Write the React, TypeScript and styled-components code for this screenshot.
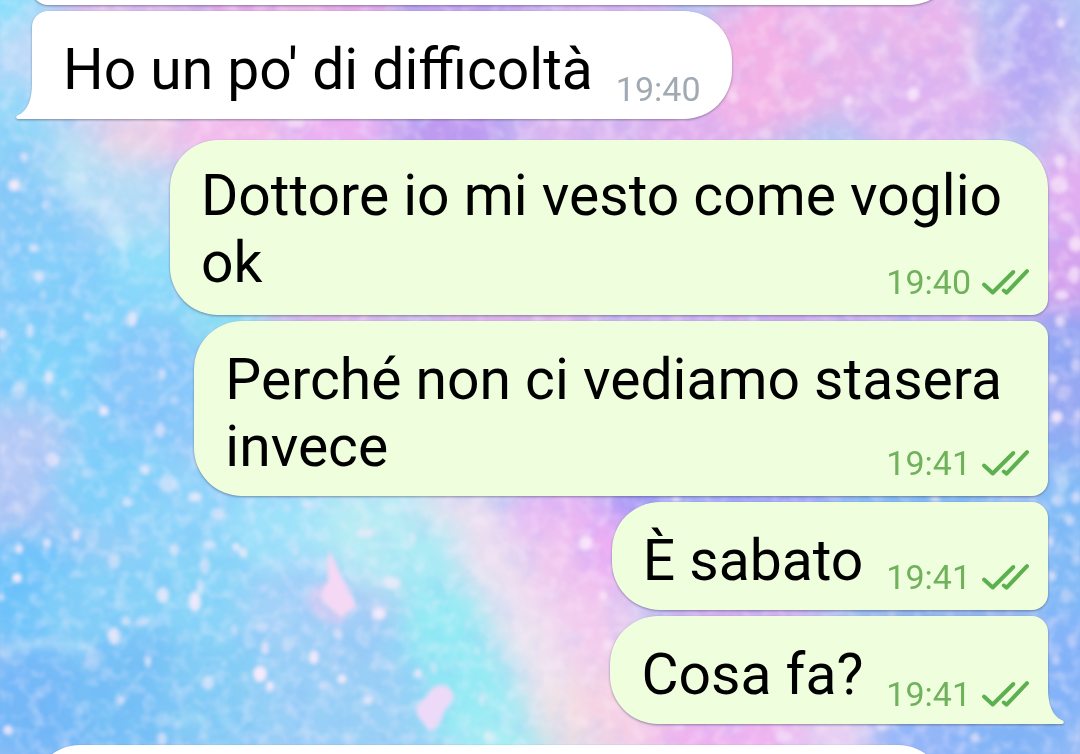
import React from "react";
import styled, { createGlobalStyle, css } from "styled-components";

const GlobalStyle = createGlobalStyle`
  *, *::before, *::after { box-sizing: border-box; }
  body { margin: 0; background: #a9cff6; font-family: Roboto, "Noto Sans", sans-serif; }
`;

const Screen = styled.main`
  position: relative;
  height: 100vh;
  overflow: hidden;
`;

const WallpaperArt = styled.svg`
  position: absolute;
  inset: 0;
  width: 100%;
  height: 100%;
`;

/* The feed is scrolled, so most of the oldest message lies above the window. */
const Feed = styled.ol`
  position: relative;
  display: flex;
  flex-direction: column;
  gap: 6px;
  margin: -103px 0 0;
  padding: 0 32px;
  list-style: none;
`;

type Side = "in" | "out";

const Item = styled.li<{ $side: Side; $newGroup?: boolean }>`
  display: flex;
  justify-content: ${(p) => (p.$side === "in" ? "flex-start" : "flex-end")};
  margin-top: ${(p) => (p.$newGroup ? "15px" : "0")};
`;

const corners = (side: Side, first: boolean, last: boolean) => {
  const near = first ? "48px" : "16px";
  const foot = last ? "0" : "16px";
  return side === "in" ? `${near} 48px 48px ${foot}` : `48px ${near} ${foot} 48px`;
};

const Bubble = styled.article<{ $side: Side; $first: boolean; $last: boolean; $inline: boolean }>`
  position: relative;
  display: grid;
  column-gap: 23px;
  padding: ${(p) => (p.$first ? "22px" : "25px")} ${(p) => (p.$side === "in" ? "31px" : "19px")}
    ${(p) => (p.$first ? "19px" : "16px")} 31px;
  border-radius: ${(p) => corners(p.$side, p.$first, p.$last)};
  background: ${(p) => (p.$side === "in" ? "#ffffff" : "#efffde")};
  filter: drop-shadow(0 1px 1px rgba(60, 60, 90, 0.5));
  ${(p) =>
    p.$inline
      ? css`
          grid-template-columns: auto auto;
        `
      : css`
          grid-template-areas: "stack";
          > p {
            grid-area: stack;
            margin-right: 27px;
          }
          > footer {
            grid-area: stack;
          }
        `}
`;

const ClippedBubble = styled.div<{ $width: string; $first?: boolean }>`
  width: ${(p) => p.$width};
  height: 108px;
  border-radius: ${(p) => corners("in", !!p.$first, false)};
  background: #ffffff;
  filter: drop-shadow(0 1px 1px rgba(60, 60, 90, 0.5));
`;

const Text = styled.p`
  margin: 0;
  color: #000000;
  font-size: 57px;
  line-height: 67px;
`;

const Line = styled.span`
  display: block;
  width: fit-content;
`;

const Meta = styled.footer<{ $side: Side; $drop: boolean }>`
  display: flex;
  align-items: center;
  align-self: end;
  justify-self: end;
  gap: 10px;
  margin-bottom: ${(p) => (p.$drop ? "-6px" : "-3px")};
  color: ${(p) => (p.$side === "in" ? "#a1aab3" : "#70b15c")};
  font-size: 34px;
  line-height: 40px;
`;

const TailShape = styled.svg<{ $side: Side }>`
  position: absolute;
  bottom: 0;
  ${(p) => (p.$side === "in" ? "left: -16px;" : "right: -16px; transform: scaleX(-1);")}
  width: 17px;
  height: 36px;
`;

const Tail = ({ side }: { side: Side }) => (
  <TailShape $side={side} viewBox="0 0 17 36" aria-hidden="true">
    <path
      d="M16 0C16 16 12 28 1.5 32.5C-.4 33.4 0 36 2 36H17V0Z"
      fill={side === "in" ? "#ffffff" : "#efffde"}
    />
  </TailShape>
);

const ReadChecks = () => (
  <svg width="48" height="28" viewBox="0 0 48 28" fill="none" stroke="#5db050" strokeWidth="4" strokeLinecap="round" strokeLinejoin="round" role="img" aria-label="Letto">
    <path d="M3 16.5L11.7 24.5L32.3 4" />
    <path d="M22.8 22.5L25.6 24.7L46 3.2" />
  </svg>
);

/* Wallpaper: large soft patches of colour as [x, y, radius x, radius y, fill]. */
const patches: [number, number, number, number, string][] = [
  [0, 10, 50, 60, "#86dffb"], [50, 60, 60, 50, "#c0daf8"], [0, 130, 55, 50, "#92d8f8"],
  [130, 5, 70, 40, "#dcb8ea"], [300, 8, 120, 40, "#e2a8e4"], [480, 8, 90, 40, "#c0a0ee"],
  [600, 8, 80, 40, "#d6b4f0"], [30, 200, 60, 60, "#88cbf8"], [90, 160, 50, 35, "#b8e2f5"],
  [155, 130, 65, 36, "#efd2e6"], [240, 130, 70, 50, "#f2bcec"], [340, 130, 50, 45, "#ecb0f2"],
  [450, 130, 60, 45, "#be9af0"], [590, 130, 80, 50, "#dab6f0"], [700, 130, 60, 50, "#e2b0ee"],
  [770, 60, 70, 80, "#f3b2e6"], [890, 40, 90, 90, "#e9b6ec"], [930, 110, 80, 50, "#dfb4f0"],
  [1035, 60, 38, 80, "#b5a8f3"], [1075, 120, 40, 45, "#cbbcf2"], [1070, 200, 45, 60, "#e0aef0"],
  [1070, 280, 45, 46, "#d6a2ee"], [1070, 350, 45, 40, "#8ea4f2"], [1070, 410, 45, 44, "#98a8f2"],
  [1070, 460, 45, 30, "#8cb0f4"], [1070, 515, 45, 50, "#80bcf6"], [1070, 590, 45, 60, "#80baf6"],
  [1070, 670, 45, 60, "#84b2f8"],
  [140, 210, 50, 50, "#b4dcf6"], [140, 275, 60, 40, "#8edffa"], [50, 300, 70, 70, "#84cefa"],
  [150, 320, 60, 40, "#88d6fa"], [60, 390, 80, 60, "#7cd2fa"], [160, 390, 70, 70, "#88c8fa"],
  [230, 318, 50, 30, "#8cdff4"], [340, 318, 80, 20, "#e4b0e8"], [520, 318, 110, 20, "#e8ace8"],
  [760, 318, 180, 20, "#d2a4ee"], [960, 318, 80, 14, "#d2a4ee"],
  [20, 450, 55, 50, "#b4caf5"], [120, 490, 70, 50, "#80d0fa"], [210, 520, 80, 60, "#8ed4fa"],
  [30, 590, 70, 60, "#6ec4fa"], [120, 610, 80, 60, "#84d0f8"], [210, 600, 70, 60, "#88d4f8"],
  [300, 530, 70, 50, "#9ee2fa"], [300, 610, 60, 50, "#a4d2f8"], [40, 710, 80, 60, "#74b8f7"],
  [140, 700, 70, 70, "#76c0f6"], [230, 700, 70, 60, "#84cdf6"], [330, 705, 80, 60, "#98cff7"],
  [390, 530, 70, 60, "#b8ecf4"], [440, 580, 46, 50, "#a4ebf4"], [370, 655, 50, 40, "#9acdf6"],
  [445, 635, 46, 46, "#92ebf4"], [400, 720, 60, 50, "#98d0f6"], [475, 700, 52, 60, "#94eaf4"],
  [500, 750, 46, 40, "#a8eef4"],
  [460, 505, 40, 20, "#eedfee"], [490, 550, 34, 46, "#ecdef0"], [520, 610, 34, 46, "#ece3f0"],
  [550, 665, 38, 46, "#efe3ee"], [580, 720, 44, 40, "#f2e2e2"],
  [560, 515, 50, 40, "#e6b4f4"], [570, 570, 44, 50, "#f0c8ee"], [610, 555, 34, 50, "#ecaef4"],
  [600, 630, 40, 50, "#f2cbee"], [620, 700, 45, 40, "#f4d2e4"], [640, 740, 40, 30, "#f6cfe6"],
  [640, 498, 40, 20, "#9a8ff5"], [760, 498, 90, 20, "#9a9ff5"], [920, 498, 90, 20, "#74b4ee"],
  [740, 612, 90, 20, "#d8a6ee"], [940, 612, 90, 20, "#88b0ea"], [700, 740, 45, 32, "#f2b0ee"],
  [760, 735, 50, 40, "#f0b4f0"], [840, 735, 40, 40, "#e8d0f2"], [930, 740, 60, 40, "#94b6f8"],
  [1020, 740, 60, 50, "#82b4f6"],
];

/* Stars as [x, y, radius x, radius y, opacity]. */
const stars: [number, number, number, number, number][] = [
  [14, 185, 6, 6, 0.9], [24, 157, 4, 5, 0.6], [45, 206, 3, 4, 0.5], [34, 248, 5, 4, 0.7],
  [39, 276, 5, 6, 0.55], [43, 295, 3, 5, 0.4], [30, 331, 4, 7, 0.6], [2, 334, 4, 5, 0.7],
  [87, 316, 3, 4, 0.5], [132, 319, 5, 8, 0.7], [49, 377, 4, 6, 0.75], [19, 390, 7, 10, 0.35],
  [64, 392, 3, 4, 0.5], [104, 411, 5, 5, 0.85], [162, 374, 4, 6, 0.6], [160, 430, 5, 8, 0.55],
  [52, 459, 7, 7, 0.6], [145, 470, 5, 5, 0.75], [168, 484, 9, 9, 0.5], [195, 497, 7, 5, 0.75],
  [174, 400, 5, 5, 0.35], [87, 473, 6, 6, 0.35], [296, 8, 20, 4, 0.25], [296, 122, 9, 6, 0.6],
  [19, 549, 4, 5, 0.85], [47, 543, 4, 5, 0.75], [76, 535, 4, 6, 0.75], [17, 578, 5, 5, 0.95],
  [1, 597, 3, 4, 0.7], [127, 502, 5, 5, 0.6], [114, 561, 6, 8, 0.5], [174, 550, 5, 6, 0.6],
  [205, 566, 5, 9, 0.5], [218, 514, 8, 6, 0.5], [236, 547, 4, 4, 0.8], [243, 553, 4, 5, 0.7],
  [210, 545, 7, 4, 0.55], [163, 595, 6, 8, 0.75], [195, 602, 6, 10, 0.85], [200, 586, 3, 8, 0.6],
  [114, 636, 6, 9, 0.75], [126, 621, 5, 5, 0.6], [142, 622, 6, 4, 0.45], [93, 660, 8, 12, 0.3],
  [148, 662, 3, 5, 0.75], [208, 683, 6, 7, 0.6], [121, 700, 4, 4, 0.55], [8, 730, 5, 5, 0.85],
  [162, 739, 5, 7, 0.6], [260, 674, 7, 8, 0.95], [270, 686, 4, 5, 0.9], [265, 648, 4, 7, 0.7],
  [262, 627, 7, 5, 0.45], [314, 657, 5, 7, 0.85], [342, 679, 5, 5, 0.85], [324, 685, 6, 4, 0.5],
  [287, 645, 5, 7, 0.4], [338, 634, 5, 5, 0.5], [234, 630, 4, 6, 0.45], [295, 551, 4, 5, 0.4],
  [307, 504, 6, 4, 0.5], [365, 533, 9, 5, 0.5], [392, 583, 9, 6, 0.7], [379, 614, 7, 6, 0.85],
  [368, 700, 5, 5, 0.75], [418, 674, 4, 5, 0.7], [434, 668, 3, 6, 0.5], [482, 700, 4, 6, 0.45],
  [489, 736, 5, 5, 0.55], [412, 538, 4, 6, 0.4], [586, 543, 7, 7, 0.85], [603, 596, 4, 5, 0.7],
  [608, 645, 5, 6, 0.6], [553, 582, 4, 6, 0.3], [477, 651, 3, 4, 0.45], [676, 499, 5, 3, 0.8],
  [913, 94, 6, 7, 0.8], [848, 100, 4, 4, 0.7], [1061, 23, 4, 5, 0.9], [1060, 161, 6, 7, 0.65],
  [1059, 185, 9, 9, 0.6], [1066, 217, 8, 5, 0.4], [1076, 244, 7, 8, 0.75], [1074, 275, 6, 9, 0.65],
  [1062, 295, 7, 5, 0.75], [1049, 276, 4, 6, 0.55], [1060, 321, 5, 6, 0.7], [1068, 343, 5, 5, 0.4],
  [1076, 365, 5, 7, 0.5], [1053, 379, 5, 5, 0.6], [1064, 392, 8, 7, 0.3], [1057, 417, 6, 6, 0.85],
  [1078, 415, 4, 6, 0.5], [1076, 498, 5, 6, 0.55], [1070, 520, 5, 5, 0.55], [1058, 500, 6, 5, 0.4],
  [1050, 541, 4, 5, 0.7], [1052, 576, 4, 5, 0.7], [1066, 596, 6, 8, 0.4], [1076, 560, 4, 6, 0.4],
  [1072, 640, 5, 6, 0.4], [1056, 660, 4, 5, 0.5], [935, 499, 5, 3, 0.7], [975, 738, 5, 5, 0.6],
  [882, 727, 6, 4, 0.6], [784, 737, 9, 6, 0.55], [733, 98, 5, 6, 0.5], [766, 134, 6, 6, 0.45],
];

/* Hazy wisps as [path, width, opacity]. */
const wisps: [string, number, number][] = [
  ["M786 30Q802 8 812 22T835 38Q825 52 812 60", 6, 0.45],
  ["M1024 10Q1006 34 1009 50T990 78L976 82Q966 62 972 30", 5, 0.5],
  ["M970 62Q982 86 962 94T905 122L885 132", 6, 0.35],
  ["M1078 95Q1060 112 1066 126T1078 150", 9, 0.45],
  ["M0 652Q30 640 60 644T92 648", 5, 0.5],
  ["M890 30Q876 50 888 78T850 100", 6, 0.25],
  ["M780 70Q768 92 790 104", 9, 0.25],
  ["M1056 470Q1066 482 1056 500", 10, 0.3],
  ["M75 182Q74 196 86 200M104 208Q112 226 124 240", 20, 0.25],
  ["M222 715Q232 730 242 738M180 722Q190 712 205 722", 5, 0.35],
  ["M425 505Q460 560 500 590", 5, 0.2],
];

const Wallpaper = () => (
  <WallpaperArt viewBox="0 0 1080 754" preserveAspectRatio="xMidYMid slice" colorInterpolationFilters="sRGB" aria-hidden="true">
    <defs>
      <filter id="soft" x="-100" y="-100" width="1280" height="954" filterUnits="userSpaceOnUse">
        <feGaussianBlur stdDeviation="16" />
      </filter>
      <filter id="glow" x="-20" y="-20" width="1120" height="794" filterUnits="userSpaceOnUse">
        <feGaussianBlur stdDeviation="2" />
      </filter>
      <filter id="haze" x="-20" y="-20" width="1120" height="794" filterUnits="userSpaceOnUse">
        <feGaussianBlur stdDeviation="4" />
      </filter>
      <filter id="dust" x="0" y="0" width="1080" height="754" filterUnits="userSpaceOnUse">
        <feTurbulence type="fractalNoise" baseFrequency="0.07" numOctaves="2" seed="7" />
        <feColorMatrix values="0 0 0 0 1  0 0 0 0 0.95  0 0 0 0 1  2.4 0 0 0 -1.05" />
        <feGaussianBlur stdDeviation="1" />
      </filter>
      <filter id="shade" x="0" y="0" width="1080" height="754" filterUnits="userSpaceOnUse">
        <feTurbulence type="fractalNoise" baseFrequency="0.035" numOctaves="3" seed="21" />
        <feColorMatrix values="0 0 0 0 0.35  0 0 0 0 0.6  0 0 0 0 1  0 2.2 0 0 -1.05" />
        <feGaussianBlur stdDeviation="1" />
      </filter>
    </defs>
    <rect width="1080" height="754" fill="#b4c8f4" />
    <g filter="url(#soft)">
      {patches.map(([x, y, rx, ry, fill]) => (
        <ellipse key={`${x}-${y}`} cx={x} cy={y} rx={rx} ry={ry} fill={fill} />
      ))}
    </g>
    <rect width="1080" height="754" filter="url(#shade)" opacity="0.12" />
    <rect width="1080" height="754" filter="url(#dust)" opacity="0.35" />
    <g filter="url(#haze)" fill="none" stroke="#ffffff" strokeLinecap="round">
      {wisps.map(([d, width, opacity]) => (
        <path key={d} d={d} strokeWidth={width} opacity={opacity} />
      ))}
      <path d="M326 588Q306 596 318 608T340 618" stroke="#ecc8f2" strokeWidth="12" opacity="0.6" />
    </g>
    <g filter="url(#glow)" fill="#fbecfb">
      {stars.map(([x, y, rx, ry, opacity]) => (
        <ellipse key={`${x}-${y}`} cx={x} cy={y} rx={rx} ry={ry} opacity={opacity} />
      ))}
      <path d="M329 550Q336 562 340 574Q352 592 356 608Q348 610 342 618Q334 612 322 602Q318 592 328 582Q326 566 329 550Z" fill="#f4d8f4" />
      <path d="M438 685Q452 684 454 698Q444 710 440 722Q430 738 424 724Q412 712 418 704Q426 698 430 690Z" fill="#ecdaf8" />
    </g>
  </WallpaperArt>
);

type Message = {
  side: Side;
  lines: string[];
  time: string;
  /* opens a run of messages from one sender */
  first?: boolean;
  /* closes a run, so it carries the tail */
  last?: boolean;
};

const messages: Message[] = [
  { side: "in", lines: ["Ho un po' di difficoltà"], time: "19:40", last: true },
  { side: "out", lines: ["Dottore io mi vesto come voglio", "ok"], time: "19:40", first: true },
  { side: "out", lines: ["Perché non ci vediamo stasera", "invece"], time: "19:41" },
  { side: "out", lines: ["È sabato"], time: "19:41" },
  { side: "out", lines: ["Cosa fa?"], time: "19:41", last: true },
];

const MessageItem = ({ side, lines, time, first = false, last = false }: Message) => (
  <Item $side={side} $newGroup={first}>
    <Bubble $side={side} $first={first} $last={last} $inline={lines.length === 1}>
      <Text>
        {lines.map((line) => (
          <Line key={line}>{line}</Line>
        ))}
      </Text>
      <Meta $side={side} $drop={first || last}>
        <time>{time}</time>
        {side === "out" && <ReadChecks />}
      </Meta>
      {last && <Tail side={side} />}
    </Bubble>
  </Item>
);

export default function App() {
  return (
    <>
      <GlobalStyle />
      <Screen>
        <Wallpaper />
        <Feed>
          <Item $side="in">
            <ClippedBubble $width="91%" />
          </Item>
          {messages.map((message) => (
            <MessageItem key={message.lines[0]} {...message} />
          ))}
          <Item $side="in" $newGroup>
            <ClippedBubble $width="90%" $first />
          </Item>
        </Feed>
      </Screen>
    </>
  );
}
